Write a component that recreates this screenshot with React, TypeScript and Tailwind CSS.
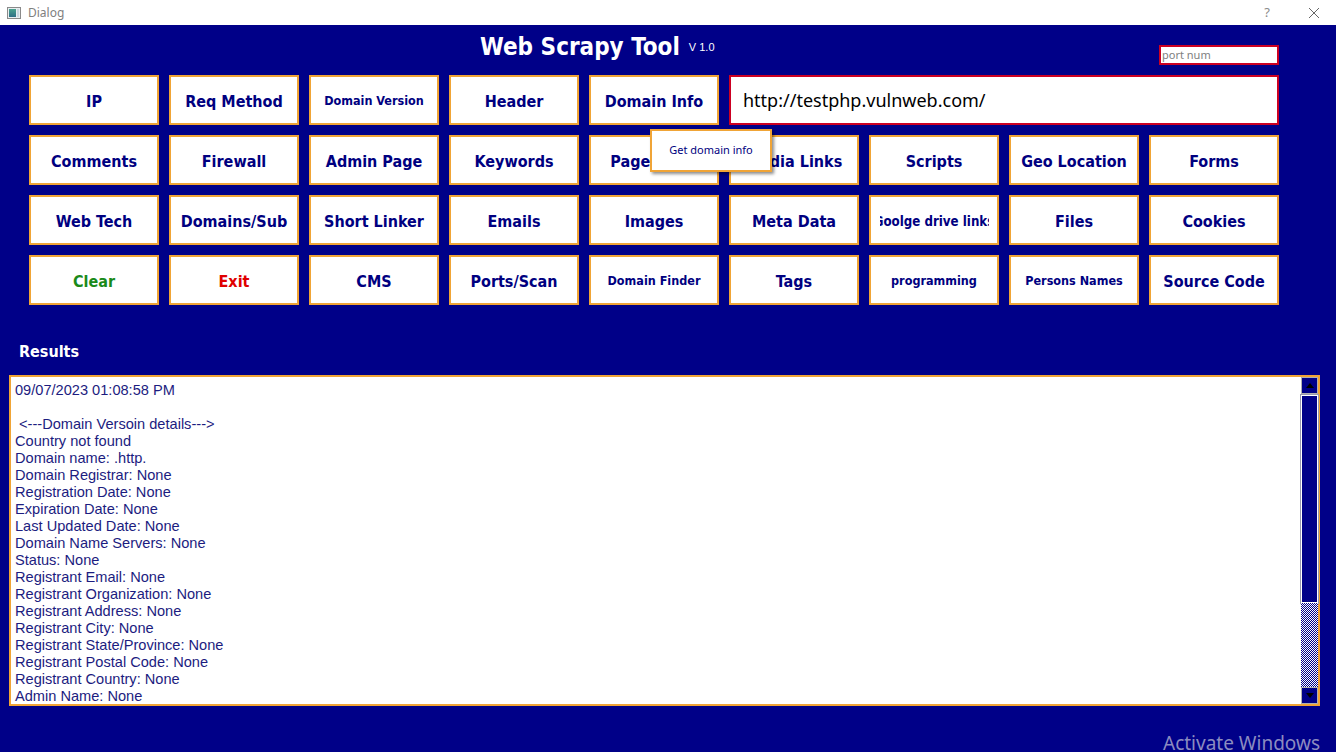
import React from "react";

const rows: { label: string; size?: "sm" | "xs"; color?: string }[][] = [
  [
    { label: "IP" },
    { label: "Req Method" },
    { label: "Domain Version", size: "sm" },
    { label: "Header" },
    { label: "Domain Info" },
  ],
  [
    { label: "Comments" },
    { label: "Firewall" },
    { label: "Admin Page" },
    { label: "Keywords" },
    { label: "Page Links" },
    { label: "Media Links" },
    { label: "Scripts" },
    { label: "Geo Location" },
    { label: "Forms" },
  ],
  [
    { label: "Web Tech" },
    { label: "Domains/Sub" },
    { label: "Short Linker" },
    { label: "Emails" },
    { label: "Images" },
    { label: "Meta Data" },
    { label: "Goolge drive links", size: "xs" },
    { label: "Files" },
    { label: "Cookies" },
  ],
  [
    { label: "Clear", color: "text-[#1a8a1a]" },
    { label: "Exit", color: "text-[#e00000]" },
    { label: "CMS" },
    { label: "Ports/Scan" },
    { label: "Domain Finder", size: "sm" },
    { label: "Tags" },
    { label: "programming", size: "sm" },
    { label: "Persons Names", size: "sm" },
    { label: "Source Code" },
  ],
];

const results = [
  "09/07/2023 01:08:58 PM",
  "",
  " <---Domain Versoin details--->",
  "Country not found",
  "Domain name: .http.",
  "Domain Registrar: None",
  "Registration Date: None",
  "Expiration Date: None",
  "Last Updated Date: None",
  "Domain Name Servers: None",
  "Status: None",
  "Registrant Email: None",
  "Registrant Organization: None",
  "Registrant Address: None",
  "Registrant City: None",
  "Registrant State/Province: None",
  "Registrant Postal Code: None",
  "Registrant Country: None",
  "Admin Name: None",
];

function ToolButton({ label, size, color }: { label: string; size?: "sm" | "xs"; color?: string }) {
  const fontSize = size === "xs" ? "text-[13.2px]" : size === "sm" ? "text-[12.5px]" : "text-[16px]";
  return (
    <div className="h-[50px] w-[130px] bg-white border-2 border-[#f0a436] flex items-center justify-center pt-[3px]">
      {/* text is clipped to the inner label area, like the Qt button */}
      <div className="w-[109px] overflow-hidden flex justify-center">
        <span
          className={`shrink-0 whitespace-nowrap font-bold font-['DejaVu_Sans_Condensed','DejaVu_Sans',sans-serif] ${fontSize} ${
            color ?? "text-[#000080]"
          }`}
        >
          {label}
        </span>
      </div>
    </div>
  );
}

export default function App() {
  return (
    <div className="w-[1336px] h-[752px] overflow-hidden relative font-['Liberation_Sans',sans-serif]">
      {/* window title bar */}
      <div className="h-[25px] bg-white flex items-center pl-[7px] pr-[16px]">
        <div className="w-[14px] h-[12px] border border-[#8a8a8a] bg-[#e8eef0] flex p-[1px] gap-[1px]">
          <div className="w-[7px] h-full bg-gradient-to-b from-[#4aa38e] to-[#2f6f86]" />
          <div className="flex-1 h-full bg-[#c9d6de]" />
        </div>
        <span className="ml-[7px] text-[12px] text-[#808080] font-['Noto_Sans',sans-serif]">Dialog</span>
        <span className="ml-auto text-[13px] text-[#8a8a8a] font-['Noto_Sans',sans-serif]">?</span>
        <svg className="ml-[38px]" width="12" height="12" viewBox="0 0 12 12">
          <path d="M1 1L11 11M11 1L1 11" stroke="#666" strokeWidth="1" />
        </svg>
      </div>

      <div className="h-[727px] bg-[#000088] relative">
        {/* header */}
        <div className="h-[50px] flex pl-[480px] pr-[57px]">
          <div className="flex items-start pt-[7px]">
            <span className="text-white font-bold text-[24px] leading-[30px] font-['DejaVu_Sans_Condensed','DejaVu_Sans',sans-serif]">
              Web Scrapy Tool
            </span>
            <span className="ml-[9px] mt-[7px] text-white text-[11px] font-['Liberation_Sans',sans-serif]">V 1.0</span>
          </div>
          <div className="ml-auto mt-[20px] w-[120px] h-[20px] bg-white border-2 border-[#cc0022] flex items-center pl-[1px] pt-[1px]">
            <span className="text-[11px] text-[#808080] font-['Noto_Sans',sans-serif]">port num</span>
          </div>
        </div>

        {/* buttons */}
        <div className="relative ml-[29px] grid grid-cols-[repeat(9,130px)] auto-rows-[50px] gap-[10px]">
          {rows[0].map((b) => (
            <ToolButton key={b.label} {...b} />
          ))}
          <div className="col-span-4 bg-white border-2 border-[#cc0022] flex items-center pl-[12px] pt-[1px]">
            <span className="text-[18px] text-black font-['Noto_Sans',sans-serif]">http://testphp.vulnweb.com/</span>
          </div>
          {rows.slice(1).flat().map((b) => (
            <ToolButton key={b.label} {...b} />
          ))}

          {/* tooltip */}
          <div className="absolute left-[621px] top-[54px] w-[122px] h-[43px] bg-white border-2 border-[#f0a436] shadow-[2px_2px_3px_rgba(0,0,0,0.45)] flex items-center justify-center">
            <span className="text-[11px] text-[#000080] font-['Noto_Sans',sans-serif]">Get domain info</span>
          </div>
        </div>

        {/* results */}
        <div className="ml-[19px] mt-[33px] h-[25px] flex items-center pt-[2px]">
          <span className="text-white font-bold text-[16px] font-['DejaVu_Sans_Condensed','DejaVu_Sans',sans-serif]">Results</span>
        </div>
        <div className="ml-[9px] mt-[12px] w-[1311px] h-[331px] border-2 border-[#f0a436] bg-white flex">
          <div className="flex-1 pl-[4px] pt-[5px] overflow-hidden text-[14.6px] leading-[17px] text-[#1c1c80] whitespace-pre">
            {results.map((line, i) => (
              <div key={i} className="h-[17px]">
                {line}
              </div>
            ))}
          </div>
          {/* scrollbar */}
          <div className="w-[17px] h-full flex flex-col bg-white">
            <div className="h-[17px] bg-[#000088] border border-[#b0b0b0] flex items-center justify-center">
              <svg width="8" height="5" viewBox="0 0 8 5">
                <path d="M4 0L8 5H0z" fill="#000" />
              </svg>
            </div>
            <div className="h-[208px] mt-[1px] bg-[#000088] border border-white outline outline-1 outline-[#9a9ab0]" />
            <div className="flex-1 bg-[repeating-conic-gradient(#000088_0_25%,#ffffff_0_50%)] bg-[length:2px_2px]" />
            <div className="h-[17px] bg-[#000088] border border-[#b0b0b0] flex items-center justify-center">
              <svg width="8" height="5" viewBox="0 0 8 5">
                <path d="M0 0H8L4 5z" fill="#000" />
              </svg>
            </div>
          </div>
        </div>

        {/* watermark */}
        <div className="absolute left-[1163px] top-[705px] text-[19px] text-[#8c8cc0] font-['Noto_Sans',sans-serif] leading-[26px]">
          Activate Windows
        </div>
      </div>
    </div>
  );
}
